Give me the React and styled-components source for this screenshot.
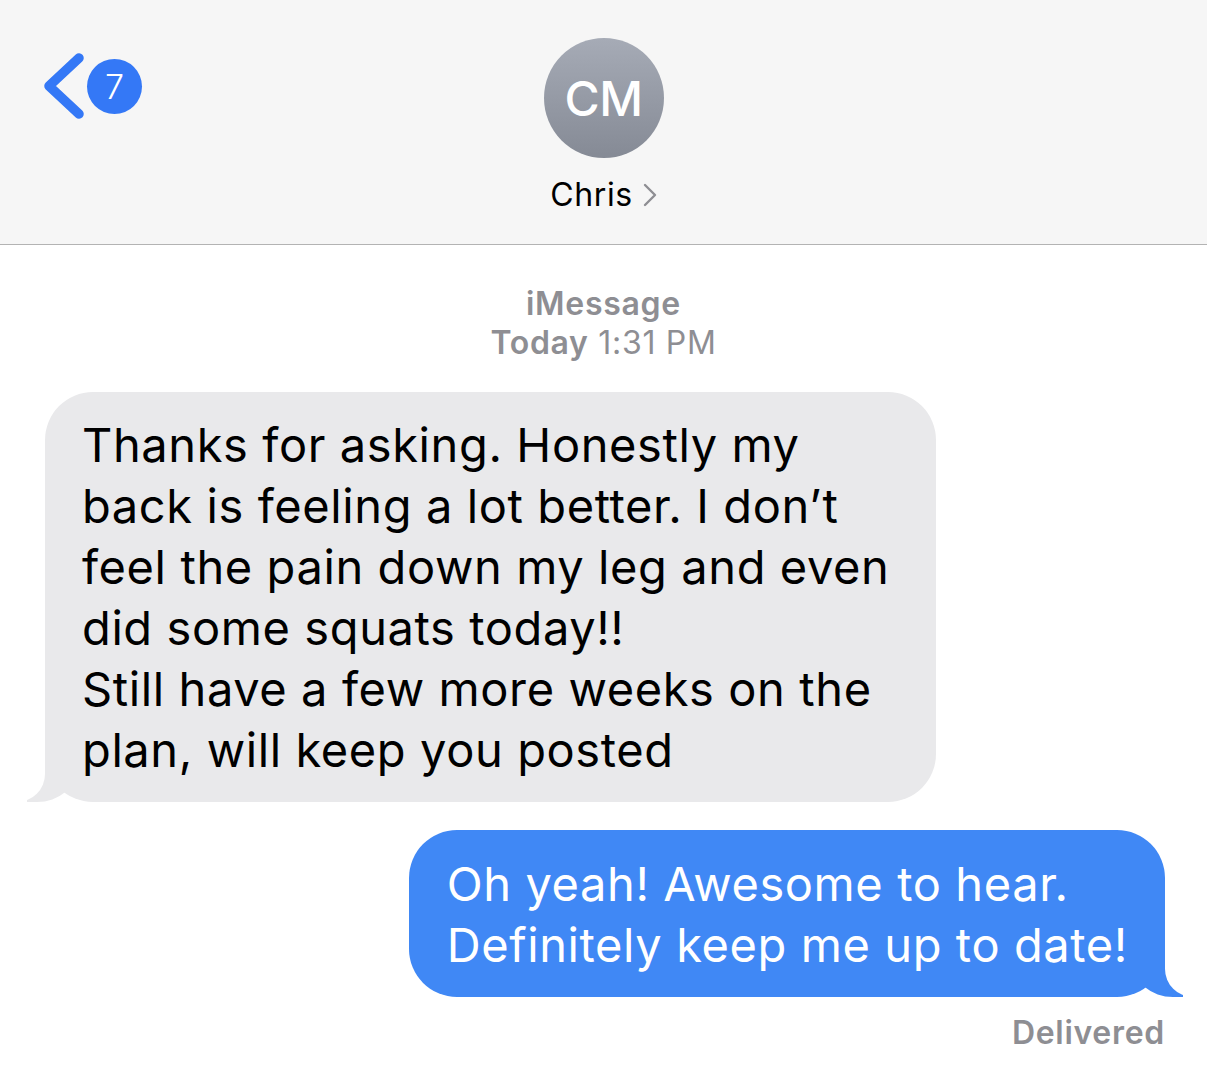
import React from "react";
import styled, { createGlobalStyle } from "styled-components";

const GlobalStyle = createGlobalStyle`
  body {
    margin: 0;
    background: #ffffff;
    font-family: Inter, "Liberation Sans", sans-serif;
    -webkit-font-smoothing: antialiased;
  }
`

const Screen = styled.div`
  width: 1207px;
  min-height: 1087px;
  background: #ffffff;
  overflow: hidden;
`

const Header = styled.header`
  display: grid;
  grid-template-columns: 1fr auto 1fr;
  box-sizing: border-box;
  height: 245px;
  padding-top: 38px;
  background: #f6f6f6;
  border-bottom: 1px solid #b3b3b3;
`

const Back = styled.div`
  display: flex;
  align-items: center;
  align-self: start;
  gap: 1px;
  margin-top: 15px;
  padding-left: 42px;
`

const Badge = styled.span`
  display: flex;
  align-items: center;
  justify-content: center;
  width: 55px;
  height: 55px;
  border-radius: 50%;
  background: #3478f6;
  color: #ffffff;
  font-size: 34px;
  font-weight: 300;
`

const Contact = styled.div`
  display: flex;
  flex-direction: column;
  align-items: center;
`

const Avatar = styled.div`
  display: flex;
  align-items: center;
  justify-content: center;
  width: 120px;
  height: 120px;
  border-radius: 50%;
  background: linear-gradient(#a6abb6, #858a95);
  color: #ffffff;
  font-size: 48px;
  font-weight: 500;
  letter-spacing: -0.5px;
`

const Name = styled.div`
  display: flex;
  align-items: center;
  gap: 10px;
  margin-top: 18px;
  font-size: 32px;
  line-height: 38px;
  letter-spacing: 0.6px;
  color: #000000;
`

const Thread = styled.main`
  display: flex;
  flex-direction: column;
  padding: 39px 0 0;
`

const Stamp = styled.div`
  text-align: center;
  color: #8e8e93;
  font-size: 32px;
  line-height: 39px;
  letter-spacing: 0.7px;

  & b {
    font-weight: 600;
  }
`

const Bubble = styled.div`
  position: relative;
  box-sizing: border-box;
  border-radius: 48px;
  font-size: 47px;
  line-height: 61px;
  letter-spacing: 0.6px;
  background: ${p => (p.$mine ? "#4088f5" : "#e9e9eb")};
  color: ${p => (p.$mine ? "#ffffff" : "#000000")};
  align-self: ${p => (p.$mine ? "flex-end" : "flex-start")};
  margin: ${p => (p.$mine ? "28px 42px 0 0" : "30px 0 0 45px")};
  padding: ${p => (p.$mine ? "23px 37px 22px 38px" : "22px 30px 22px 37px")};
  width: ${p => (p.$mine ? "auto" : "891px")};

  &::before,
  &::after {
    content: "";
    position: absolute;
    bottom: 0;
    height: 50px;
  }

  &::before {
    width: 50px;
    background: inherit;
    ${p => (p.$mine ? "right: -18px;" : "left: -18px;")}
    ${p =>
      p.$mine
        ? "border-bottom-left-radius: 40px 34px;"
        : "border-bottom-right-radius: 40px 34px;"}
  }

  &::after {
    width: 62px;
    background: #ffffff;
    ${p => (p.$mine ? "right: -62px;" : "left: -62px;")}
    ${p =>
      p.$mine
        ? "border-bottom-left-radius: 28px;"
        : "border-bottom-right-radius: 28px;"}
  }
`

const Line = styled.span`
  position: relative;
  z-index: 1;
  display: block;
  white-space: nowrap;
`

const Status = styled.div`
  align-self: flex-end;
  margin: 18px 42px 0 0;
  color: #8e8e93;
  font-size: 32px;
  line-height: 36px;
  letter-spacing: 0.7px;
  font-weight: 600;
`

const theirs = [
  "Thanks for asking. Honestly my",
  "back is feeling a lot better. I don\u2019t",
  "feel the pain down my leg and even",
  "did some squats today!!",
  "Still have a few more weeks on the",
  "plan, will keep you posted",
];

const mine = ["Oh yeah! Awesome to hear.", "Definitely keep me up to date!"];

const App = () => (
  <Screen>
    <GlobalStyle />
    <Header>
      <Back>
        <svg width="44" height="66" viewBox="0 0 44 66">
          <polyline
            points="37,5 7,33 37,61"
            fill="none"
            stroke="#3478f6"
            strokeWidth="9.5"
            strokeLinecap="round"
            strokeLinejoin="round"
          />
        </svg>
        <Badge>7</Badge>
      </Back>
      <Contact>
        <Avatar>CM</Avatar>
        <Name>
          Chris
          <svg width="14" height="24" viewBox="0 0 14 24">
            <polyline
              points="2,2 12,12 2,22"
              fill="none"
              stroke="#8e8e93"
              strokeWidth="2.4"
              strokeLinecap="round"
              strokeLinejoin="round"
            />
          </svg>
        </Name>
      </Contact>
      <div />
    </Header>
    <Thread>
      <Stamp>
        <b>iMessage</b>
        <br />
        <b>Today</b> 1:31 PM
      </Stamp>
      <Bubble>
        {theirs.map((t, i) => (
          <Line key={i}>{t}</Line>
        ))}
      </Bubble>
      <Bubble $mine>
        {mine.map((t, i) => (
          <Line key={i}>{t}</Line>
        ))}
      </Bubble>
      <Status>Delivered</Status>
    </Thread>
  </Screen>
);

export default App;
